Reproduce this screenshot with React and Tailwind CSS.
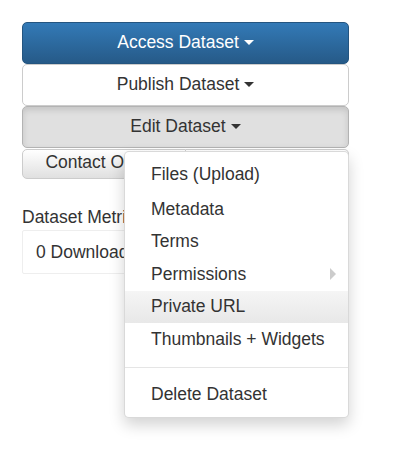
const FONT = { fontFamily: '"Liberation Sans", Arial, Helvetica, sans-serif' };

// ── Caret ──────────────────────────────────────────────────────────────────────

function Caret() {
  return (
    <span className="inline-block w-0 h-0 ml-[5px] align-middle border-t-[5px] border-t-current border-x-[5px] border-x-transparent" />
  );
}

// ── Menu item ──────────────────────────────────────────────────────────────────

function MenuItem({ label, active, submenu, extra }) {
  return (
    <div
      className={`relative pl-[26px] pr-[25px] py-[3.75px] leading-[25px] text-[#333] whitespace-nowrap
        ${active ? 'bg-gradient-to-b from-[#f5f5f5] to-[#e8e8e8]' : ''} ${extra ?? ''}`}>
      {label}
      {submenu && (
        <span className="absolute right-[12px] top-1/2 -translate-y-1/2 w-0 h-0 border-l-[6px] border-l-[#ccc] border-y-[6px] border-y-transparent" />
      )}
    </div>
  );
}

export default function App() {
  return (
    <div className="bg-white w-[397px] h-[462px] pt-[22px] pl-[22px] text-[17.5px] text-[#333]" style={FONT}>
      <div className="w-[327px] flex flex-col">

        {/* ── Access ── */}
        <div className="h-[42px] flex items-center justify-center rounded-[5px] border border-[#245580] bg-gradient-to-b from-[#337ab7] to-[#265a88] text-white leading-[25px] pb-[2px]">
          Access Dataset<Caret />
        </div>

        {/* ── Publish ── */}
        <div className="h-[42px] flex items-center justify-center rounded-[5px] border border-[#ccc] bg-white leading-[25px] pb-[2px]">
          Publish Dataset<Caret />
        </div>

        {/* ── Edit (open) ── */}
        <div className="relative">
          <div className="h-[42px] flex items-center justify-center rounded-[5px] border border-[#b3b3b3] bg-[#e0e0e0] shadow-[inset_0_3px_6px_rgba(0,0,0,0.125)] leading-[25px] pb-[2px]">
            Edit Dataset<Caret />
          </div>

          {/* ── Contact row ── */}
          <div className="mt-[1px] flex h-[30px]">
            <div className="w-1/2 flex justify-center leading-[25px] rounded-l-[5px] border border-[#ccc] bg-gradient-to-b from-white to-[#e0e0e0]">
              Contact Owner
            </div>
            <div className="w-1/2 rounded-r-[5px] border border-l-0 border-[#ccc] bg-gradient-to-b from-white to-[#e0e0e0]" />
          </div>

          {/* ── Dropdown ── */}
          <div className="absolute z-10 right-0 top-[45px] w-[225px] bg-white border border-[rgba(0,0,0,0.15)] rounded-[5px] py-[6px] shadow-[0_7px_15px_rgba(0,0,0,0.175)]">
            <MenuItem label="Files (Upload)" extra="mb-[2.5px]" />
            <MenuItem label="Metadata" />
            <MenuItem label="Terms" />
            <MenuItem label="Permissions" submenu />
            <MenuItem label="Private URL" active />
            <MenuItem label="Thumbnails + Widgets" />
            <div className="h-px bg-[#e5e5e5] my-[11px]" />
            <MenuItem label="Delete Dataset" />
          </div>
        </div>

        {/* ── Metrics ── */}
        <div className="mt-[26px] leading-[25px]">Dataset Metrics</div>
        <div className="border border-[#eee] rounded-[2px] px-[13px] py-[8.5px] leading-[25px]">
          0 Downloads
        </div>
      </div>
    </div>
  );
}
